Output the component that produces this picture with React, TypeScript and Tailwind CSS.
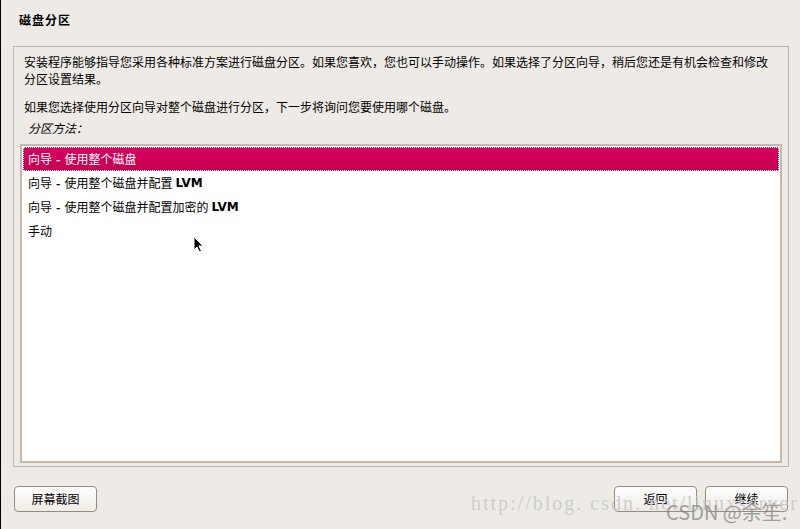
const rows = [
  { text: "向导", rest: "使用整个磁盘并配置 ", tail: "LVM" },
  { text: "向导", rest: "使用整个磁盘并配置加密的 ", tail: "LVM" },
];

const App = () => {
  return (
    <div
      className="relative w-[800px] h-[529px] overflow-hidden bg-[#eeebe7] border-l border-black text-[12px] text-black"
      style={{ fontFamily: '"Noto Sans CJK SC", "DejaVu Sans", sans-serif' }}
    >
      <div className="h-[46px] pl-[18px] pt-[11px] font-bold leading-[17px] tracking-[1px]">磁盘分区</div>

      <div className="ml-[12px] mr-[11px] h-[421px] border border-[#bbb4aa] px-[6px] pb-[3px] flex flex-col">
        <div className="px-[4px] pt-[6px] leading-[17px]">
          <p>
            安装程序能够指导您采用各种标准方案进行磁盘分区。如果您喜欢，您也可以手动操作。如果选择了分区向导，稍后您还是有机会检查和修改
            <br />
            分区设置结果。
          </p>
          <p className="mt-[11px]">如果您选择使用分区向导对整个磁盘进行分区，下一步将询问您要使用哪个磁盘。</p>
          <p className="mt-[4px] pl-[4px] italic">分区方法：</p>
        </div>

        <div className="mt-[8px] flex-1 bg-white border-2 border-[#c6b9a6] p-[1px]">
          <div className="h-[24px] flex items-center pl-[4px] text-white bg-gradient-to-b from-[#d6005f] to-[#c6004f] border border-dotted border-white">
            向导 <span className="font-bold mx-[4px]">-</span> 使用整个磁盘
          </div>
          {rows.map((r) => (
            <div key={r.rest} className="h-[24px] flex items-center pl-[5px]">
              {r.text} <span className="font-bold mx-[4px]">-</span> {r.rest}
              <span className="font-bold ml-[3px]" style={{ fontFamily: '"DejaVu Sans", sans-serif' }}>
                {r.tail}
              </span>
            </div>
          ))}
          <div className="h-[24px] flex items-center pl-[5px]">手动</div>
        </div>
      </div>

      <div className="flex items-center justify-between pl-[13px] pr-[12px] mt-[19px]">
        <button className="w-[83px] h-[26px] rounded-[4px] border border-[#948b7f] bg-gradient-to-b from-white to-[#efebe6]">
          屏幕截图
        </button>
        <div className="flex gap-[8px]">
          <button className="w-[83px] h-[26px] rounded-[4px] border border-[#948b7f] bg-gradient-to-b from-white to-[#efebe6]">
            返回
          </button>
          <button className="w-[83px] h-[26px] rounded-[4px] border border-[#948b7f] bg-gradient-to-b from-white to-[#efebe6]">
            继续
          </button>
        </div>
      </div>

      {/* mouse pointer */}
      <svg className="absolute left-[192px] top-[236px]" width="11" height="17" viewBox="0 0 11 17">
        <path d="M1 1 L1 14 L4 11 L6.5 16 L8.5 15 L6 10 L10 10 Z" fill="black" stroke="white" strokeWidth="1" />
      </svg>

      {/* watermarks */}
      <div
        className="absolute left-[470px] top-[488px] text-[20px] text-[#cdcdcd] tracking-[2px] whitespace-nowrap"
        style={{ fontFamily: '"Liberation Serif", serif' }}
      >
        http://blog. csdn. net/linuxserver
      </div>
      <div className="absolute left-[665px] top-[497px] text-[20px] text-[#8a8a8a]/80 whitespace-nowrap">CSDN @余笙.</div>
    </div>
  );
};

export default App;
